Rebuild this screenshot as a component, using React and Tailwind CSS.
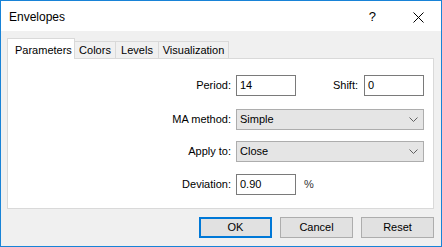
import React from 'react';

const ui = { fontFamily: '"Liberation Sans", Arial, sans-serif' };

function Chevron() {
  return (
    <svg width="9" height="5" viewBox="0 0 9 5" className="ml-auto mr-[5px]">
      <path d="M0.5 0.5 L4.5 4.5 L8.5 0.5" fill="none" stroke="#606060" strokeWidth="1" />
    </svg>
  );
}

function TextBox({ value, className = '' }) {
  return (
    <div className={`w-[60px] h-[21px] border border-[#7a7a7a] bg-white flex items-center pl-[3px] text-[11px] text-black ${className}`}>
      {value}
    </div>
  );
}

function Select({ value }) {
  return (
    <div className="w-[188px] h-[21px] border border-[#adadad] bg-[#e5e5e5] flex items-center pl-[3px] text-[11px] text-black">
      {value}
      <Chevron />
    </div>
  );
}

function Label({ children }) {
  return <div className="w-[224px] pr-[1px] text-right text-[11px] text-black mr-[4px]">{children}</div>;
}

function Button({ children, primary }) {
  return (
    <div
      className={`w-[73px] h-[21px] flex items-center justify-center text-[11px] text-black bg-[#e1e1e1] ${
        primary ? 'border-2 border-[#0078d7]' : 'border border-[#adadad]'
      }`}
    >
      {children}
    </div>
  );
}

export default function App() {
  const tabs = [
    { name: 'Colors', w: 'w-[41px]' },
    { name: 'Levels', w: 'w-[43px]' },
    { name: 'Visualization', w: 'w-[70px]' },
  ];

  return (
    <div className="w-[442px] h-[247px] border border-[#1883d7] bg-[#f0f0f0] flex flex-col" style={ui}>
      {/* title bar */}
      <div className="h-[30px] bg-white flex items-center pl-[8px] pt-[2px] shrink-0">
        <span className="text-[12px] text-black">Envelopes</span>
        <span className="ml-auto text-[13px] text-black mr-[37px]">?</span>
        <svg width="11" height="11" viewBox="0 0 11 11" className="mr-[17px]">
          <path d="M0.5 0.5 L10.5 10.5 M10.5 0.5 L0.5 10.5" stroke="#000" strokeWidth="1" />
        </svg>
      </div>

      <div className="flex-1 flex flex-col pl-[6px] pr-[7px] pt-[7px]">
        {/* tabs */}
        <div className="h-[20px] flex items-end">
          <div className="relative z-10 w-[68px] h-[21px] -mb-[1px] bg-white border-t border-x border-[#d9d9d9] flex items-start pt-[3px] pl-[7px] text-[11px] text-black">
            Parameters
          </div>
          {tabs.map((t) => (
            <div
              key={t.name}
              className={`${t.w} h-[17px] border-t border-r border-[#d9d9d9] bg-[#f0f0f0] flex items-center justify-center text-[11px] text-black`}
            >
              {t.name}
            </div>
          ))}
        </div>

        {/* panel */}
        <div className="h-[151px] bg-white border border-[#d9d9d9] pt-[16px]">
          <div className="flex items-center">
            <Label>Period:</Label>
            <TextBox value="14" />
            <div className="w-[62px] text-right text-[11px] text-black">Shift:</div>
            <TextBox value="0" className="ml-[6px]" />
          </div>
          <div className="flex items-center mt-[13px]">
            <Label>MA method:</Label>
            <Select value="Simple" />
          </div>
          <div className="flex items-center mt-[11px]">
            <Label>Apply to:</Label>
            <Select value="Close" />
          </div>
          <div className="flex items-center mt-[12px]">
            <Label>Deviation:</Label>
            <TextBox value="0.90" className="h-[20px]" />
            <span className="ml-[8px] text-[11px] text-[#333]">%</span>
          </div>
        </div>

        {/* buttons */}
        <div className="flex justify-end gap-[8px] mt-[8px]">
          <Button primary>OK</Button>
          <Button>Cancel</Button>
          <Button>Reset</Button>
        </div>
      </div>
    </div>
  );
}
